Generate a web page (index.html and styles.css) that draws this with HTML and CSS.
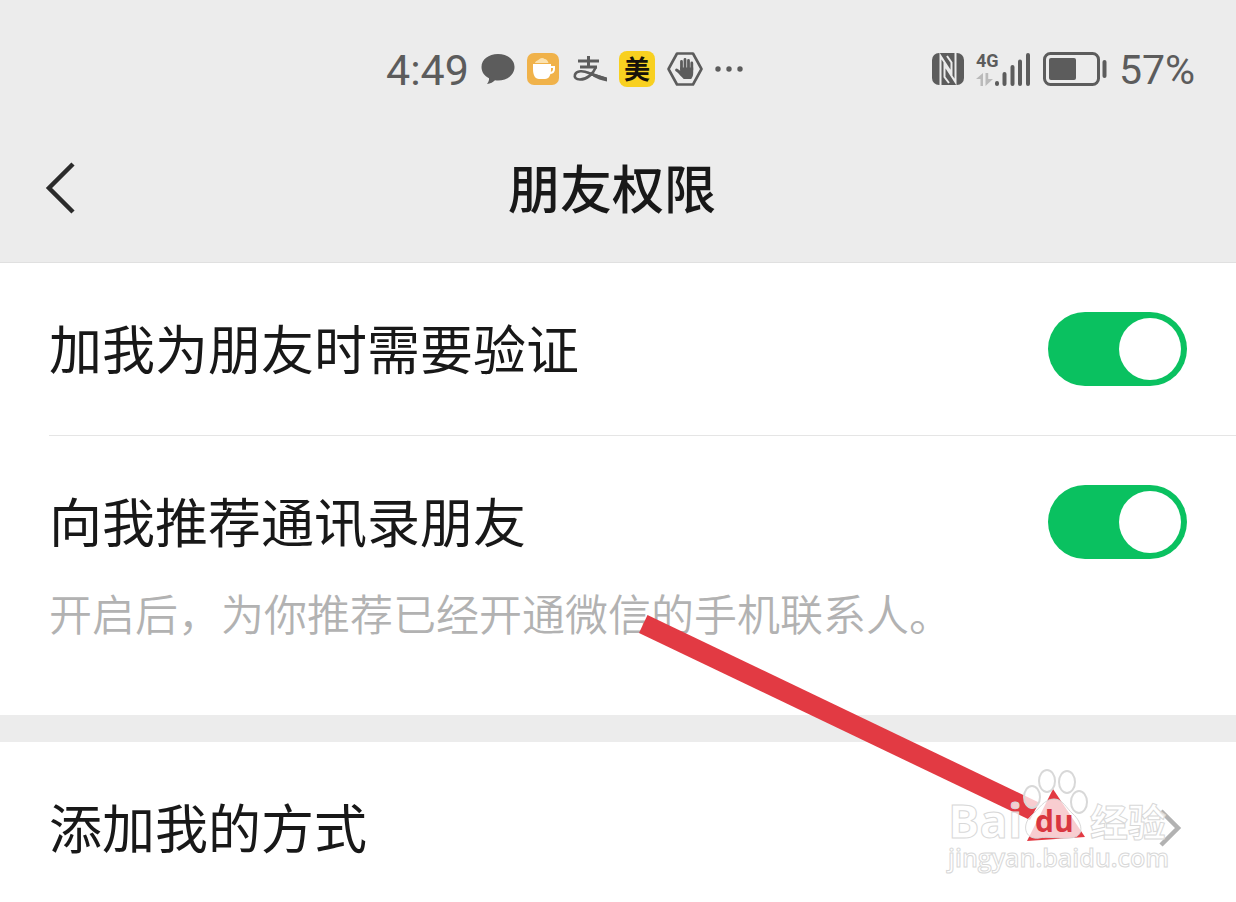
FILE: index.html
```html
<!DOCTYPE html>
<html lang="zh-CN">
<head>
<meta charset="utf-8">
<meta name="viewport" content="width=device-width, initial-scale=1">
<title>朋友权限</title>
<link rel="stylesheet" href="styles.css">
</head>
<body>
<header class="top">
  <div class="status">
    <div class="status-left">
      <span class="time">4:49</span>
      <svg width="34" height="32" viewBox="0 0 34 32"><path d="M17 1C7.500 1 .5 6.500.5 14c0 5 3 9 7.500 11.300.2 2-.6 3.800-2 5.700 3.500-.3 6.200-1.800 8-3.700 1 .2 2 .2 3 .2 9.500 0 16.500-5.800 16.500-13.500S26.500 1 17 1z" fill="#5c5c5c"/></svg>
      <svg width="32" height="32" viewBox="0 0 32 32"><rect width="32" height="32" rx="7" fill="#f0b24a"/><path d="M8 10c1-3 3-2 4.500-4 1.500-1.500 4-1.500 5 0 2 0 3.500 2 4 4z" fill="#fbe2b0"/><path d="M6 11h18v5c0 6-2 10-6 10h-6c-4 0-6-4-6-10z" fill="#fff"/><path d="M23 14h4v2c0 2.500-2 4-4.500 4" fill="none" stroke="#fff" stroke-width="2"/></svg>
      <svg class="ic-zhi" width="34" height="28" viewBox="0 0 34 28"><g fill="none" stroke="#5c5c5c" stroke-width="3"><path d="M5 6h21M15.500 1v11M7 12h17"/><path d="M23 12c-3 7-9 12.500-16 12.500-4 0-6-2-5-5 1.500-4 8-4 14-1.500l17 6" stroke-width="2.600"/></g><path d="M20 18.500l14 4v4c-6-1-10-3-14-5z" fill="#5c5c5c"/></svg>
      <span class="mei">美</span>
      <svg width="36" height="34" viewBox="0 0 36 34"><path d="M10 1.500h16L34.500 17 26 32.500H10L1.500 17z" fill="none" stroke="#5c5c5c" stroke-width="2.600" stroke-linejoin="round"/><g stroke="#5c5c5c" stroke-width="2.800" stroke-linecap="round" fill="none"><path d="M14.500 18V9.500M18 17V7.500M21.500 17V8.500M24.800 18v-7M14 21l-4.500-3"/></g><path d="M13 15.500h13.200V21c0 3-1 4-2 6h-7.500c-2-2-5-5-7-8l4 .5z" fill="#5c5c5c"/></svg>
      <svg width="28" height="6" viewBox="0 0 28 6" fill="#5c5c5c"><circle cx="3" cy="3" r="2.700"/><circle cx="14" cy="3" r="2.700"/><circle cx="25" cy="3" r="2.700"/></svg>
    </div>
    <div class="status-right">
      <svg width="32" height="32" viewBox="0 0 32 32"><rect width="32" height="32" rx="7" fill="#5c5c5c"/><path d="M8.500 32V3L19.500 20V9.500L15 3M23.500 0v29L12.500 12v12l4.500 6" fill="none" stroke="#ececec" stroke-width="2"/></svg>
      <svg class="ic-signal" width="55" height="40" viewBox="0 0 55 40"><text class="net-text" x="0" y="18">4G</text><path d="M4.500 37V30H0l7-6v13zM9.500 24h2.700v6H17l-7.500 7z" fill="#bababa"/><g stroke="#5c5c5c" stroke-width="4" stroke-linecap="round"><path d="M21 34v1M28.500 25v10M36.500 18v17M44 12.500V35M52 6v29"/></g></svg>
      <svg width="64" height="34" viewBox="0 0 64 34"><rect x="1.500" y="1.500" width="54" height="31" rx="6" fill="none" stroke="#5c5c5c" stroke-width="3"/><rect x="6" y="6" width="27" height="22" rx="2" fill="#5c5c5c"/><path d="M61.500 10v14" stroke="#5c5c5c" stroke-width="4" stroke-linecap="round"/></svg>
      <span class="percent">57%</span>
    </div>
  </div>
  <nav class="titlebar">
    <button class="back" aria-label="返回"><svg width="32" height="54" viewBox="0 0 32 54"><path d="M29 3L5 27l24 24" fill="none" stroke="#2b2b2b" stroke-width="4.500"/></svg></button>
    <h1 class="title">朋友权限</h1>
  </nav>
</header>
<main>
  <section class="group">
    <div class="row">
      <label class="name" for="verify">加我为朋友时需要验证</label>
      <input class="switch" type="checkbox" id="verify" checked>
    </div>
    <div class="row row-second">
      <label class="name" for="recommend">向我推荐通讯录朋友</label>
      <input class="switch" type="checkbox" id="recommend" aria-describedby="hint" checked>
    </div>
    <p class="hint" id="hint">开启后，为你推荐已经开通微信的手机联系人。</p>
  </section>
  <a class="row row-link" href="#">
    <span class="name">添加我的方式</span>
    <svg width="24" height="40" viewBox="0 0 24 40"><path d="M3 3l17 17L3 37" fill="none" stroke="#b2b2b2" stroke-width="4.500"/></svg>
  </a>
</main>
<svg class="overlay" width="600" height="302" viewBox="0 0 600 302" aria-hidden="true">
  <path d="M11.500 15L403 202.500 394 220 3 33z" fill="#e23a43"/>
  <path d="M417 189l32 48-58 4z" fill="#e23a43"/>
  <g class="mark">
    <ellipse cx="396" cy="197" rx="8" ry="11"/>
    <ellipse cx="411" cy="181" rx="8" ry="11"/>
    <ellipse cx="431" cy="182" rx="8" ry="11"/>
    <ellipse cx="443" cy="202" rx="8" ry="11"/>
    <path d="M418 199c9 0 12 9 19 15 9 8 13 23-3 24-9 1-23-2-31 0-15 2-17-14-8-22 8-7 13-17 23-17z"/>
    <text class="mark-bai" x="312" y="238">Bai</text>
    <text class="mark-cn" x="454" y="236">经验</text>
    <text class="mark-url" x="312" y="267">jingyan.baidu.com</text>
  </g>
  <text class="mark-du" x="399" y="232">du</text>
</svg>
</body>
</html>
```
FILE: styles.css
```css
* { box-sizing: border-box; }
body {
  position: relative;
  margin: 0;
  background: #fff;
  color: #181818;
  font-family: "Noto Sans CJK SC", sans-serif;
  overflow-x: hidden;
}
svg { display: block; flex: none; overflow: visible; }
.top {
  background: #ececec;
  border-bottom: 1px solid #e0e0e0;
  padding-top: 39px;
}
.status {
  display: flex;
  justify-content: space-between;
  align-items: center;
  height: 60px;
  padding: 0 41px 0 386px;
  color: #5c5c5c;
}
.status-left, .status-right { display: flex; align-items: center; gap: 12px; }
.time, .percent { padding-top: 2px; font-family: Roboto, sans-serif; line-height: 58px; }
.time { font-size: 43px; }
.percent { font-size: 41px; }
.ic-zhi { margin-left: 2px; }
.mei {
  width: 36px;
  height: 36px;
  border-radius: 8px;
  background: #f8d020;
  color: #17120a;
  font-size: 26px;
  font-weight: 700;
  line-height: 34px;
  text-align: center;
}
.net-text { font: 700 18px Roboto, sans-serif; fill: #5c5c5c; }
.titlebar {
  display: grid;
  grid-template-columns: 96px 1fr 108px;
  align-items: start;
  height: 163px;
  padding-top: 52px;
}
.back {
  justify-self: start;
  margin: 10px 0 0 44px;
  padding: 0;
  border: 0;
  background: none;
}
.title {
  margin: 0;
  font-size: 52px;
  font-weight: 500;
  line-height: 72px;
  text-align: center;
}
.row {
  display: flex;
  justify-content: space-between;
  align-items: center;
  padding: 49px;
  color: inherit;
  text-decoration: none;
}
.name { padding-bottom: 4px; font-size: 53px; line-height: 70px; }
.switch {
  appearance: none;
  flex: none;
  width: 139px;
  height: 74px;
  margin: 0;
  padding: 6px;
  border-radius: 37px;
  background: #0ac160;
}
.switch::before {
  content: "";
  display: block;
  width: 62px;
  height: 62px;
  border-radius: 50%;
  background: #fff;
}
.switch:checked::before { margin-left: auto; }
.row-second {
  margin-left: 49px;
  padding: 49px 49px 20px 0;
  border-top: 1px solid #e5e5e5;
}
.hint {
  margin: 0;
  padding: 0 49px 70px;
  color: #b2b2b2;
  font-size: 43px;
  font-weight: 350;
  line-height: 66px;
}
.group { border-bottom: 27px solid #ececec; }
.row-link { padding: 49px 54px 37px 49px; }
.overlay { position: absolute; top: 600px; left: 636px; pointer-events: none; }
.mark {
  fill: #fff;
  fill-opacity: .75;
  stroke: #d8d8d8;
  stroke-width: 1px;
}
.mark ellipse { stroke-width: 2px; }
.mark-bai { font: 700 47px "Open Sans", sans-serif; }
.mark-cn { font: 700 38px "Noto Sans CJK SC", sans-serif; }
.mark-url { font: 600 25px "Open Sans", sans-serif; }
.mark-du { font: 700 30px "Open Sans", sans-serif; fill: #d9363f; }
```
